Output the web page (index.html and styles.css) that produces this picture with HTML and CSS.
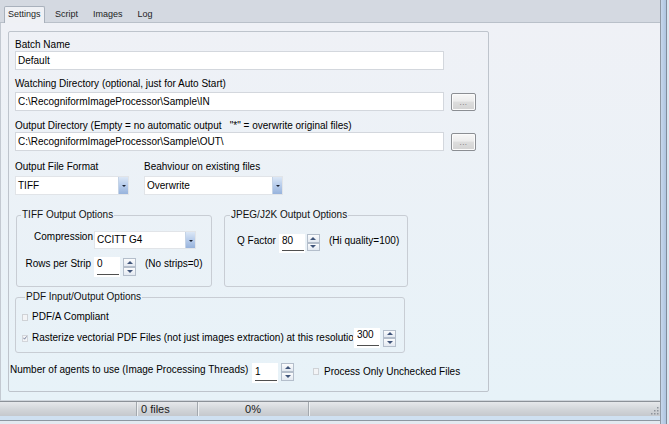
FILE: index.html
```html
<!DOCTYPE html>
<html>
<head>
<meta charset="utf-8">
<title>Batch Settings</title>
<link rel="stylesheet" href="styles.css">
</head>
<body>
<div class="window">
  <div class="client">
    <div class="tabs">
      <div class="tab active">Settings</div>
      <div class="tab first">Script</div>
      <div class="tab">Images</div>
      <div class="tab">Log</div>
    </div>
    <div class="panel">
      <div class="box">
        <div class="lbl">Batch Name</div>
        <div class="tb tb-batch">Default</div>

        <div class="lbl mt8">Watching Directory (optional, just for Auto Start)</div>
        <div class="line mt2">
          <div class="tb">C:\RecogniformImageProcessor\Sample\IN</div>
          <div class="btn"><span>...</span></div>
        </div>

        <div class="lbl mt9">Output Directory (Empty = no automatic output &nbsp;&nbsp;"*" = overwrite original files)</div>
        <div class="line">
          <div class="tb">C:\RecogniformImageProcessor\Sample\OUT\</div>
          <div class="btn"><span>...</span></div>
        </div>

        <div class="pair mt10">
          <div class="lbl col1">Output File Format</div>
          <div class="lbl">Beahviour on existing files</div>
        </div>
        <div class="pair mt3">
          <div class="dd dd-format"><span class="ddv">TIFF</span><span class="arr"></span></div>
          <div class="dd dd-behav"><span class="ddv">Overwrite</span><span class="arr"></span></div>
        </div>

        <div class="groups">
          <fieldset class="grp tiff">
            <legend>TIFF Output Options</legend>
            <div class="tgrid">
              <div class="rl">Compression</div>
              <div class="dd dd-comp"><span class="ddv">CCITT G4</span><span class="arr"></span></div>
              <div class="rl rl-rows">Rows per Strip</div>
              <div class="ctl">
                <div class="num"><div class="nv">0</div></div>
                <div class="spin"><div class="sb up"></div><div class="sb dn"></div></div>
                <span class="note n-strips">(No strips=0)</span>
              </div>
            </div>
          </fieldset>
          <fieldset class="grp jpeg">
            <legend>JPEG/J2K Output Options</legend>
            <div class="qrow">
              <span class="qlbl">Q Factor</span>
              <div class="num num-q"><div class="nv">80</div></div>
              <div class="spin"><div class="sb up"></div><div class="sb dn"></div></div>
              <span class="note n-q">(Hi quality=100)</span>
            </div>
          </fieldset>
        </div>

        <fieldset class="grp pdf">
          <legend>PDF Input/Output Options</legend>
          <div class="crow">
            <span class="cb"></span>
            <span class="clbl">PDF/A Compliant</span>
          </div>
          <div class="crow crow2">
            <span class="cb checked"><svg width="6" height="6" viewBox="0 0 6 6"><path d="M0.6 2.6 L2.3 4.8 L5.4 0.6" fill="none" stroke="#5d6b8c" stroke-width="1.2"/></svg></span>
            <span class="clbl clip">Rasterize vectorial PDF Files (not just images extraction) at this resolution</span>
            <div class="num num-res"><div class="nv">300</div></div>
            <div class="spin"><div class="sb up"></div><div class="sb dn"></div></div>
          </div>
        </fieldset>

        <div class="agents">
          <span class="albl">Number of agents to use (Image Processing Threads)</span>
          <div class="num"><div class="nv nv-low">1</div></div>
          <div class="spin spin-a"><div class="sb up"></div><div class="sb dn"></div></div>
          <span class="cb cb-proc"></span>
          <span class="plbl">Process Only Unchecked Files</span>
        </div>
      </div>
    </div>
    <div class="status">
      <div class="seg s1"></div>
      <div class="seg s2">0 files</div>
      <div class="seg s3">0%</div>
      <div class="seg s4">
        <svg class="grip" width="9" height="9" viewBox="0 0 9 9">
          <g fill="#8d939b">
            <rect x="7" y="1" width="1.5" height="1.5"/>
            <rect x="4" y="4" width="1.5" height="1.5"/>
            <rect x="7" y="4" width="1.5" height="1.5"/>
            <rect x="1" y="7" width="1.5" height="1.5"/>
            <rect x="4" y="7" width="1.5" height="1.5"/>
            <rect x="7" y="7" width="1.5" height="1.5"/>
          </g>
        </svg>
      </div>
    </div>
    <div class="bframe"></div>
  </div>
  <div class="rframe"></div>
</div>
</body>
</html>
```

FILE: styles.css
```css
* { box-sizing: border-box; }
html, body { margin: 0; padding: 0; }
body {
  width: 669px;
  height: 424px;
  overflow: hidden;
  font-family: "Liberation Sans", Arial, sans-serif;
  font-size: 10px;
  color: #000;
  background: #fff;
}
.window { display: flex; width: 669px; height: 424px; }
.client { width: 660px; display: flex; flex-direction: column; }
.rframe {
  width: 9px;
  background: linear-gradient(to right, #8f98a3 0 1px, #c6d7ec 1px, #aec4df 6px, #7f8c9b 6px 7px, #dde6f0 7px);
}

/* tabs */
.tabs {
  height: 23px;
  background: #d4d9e1;
  border-bottom: 1px solid #b9c0c9;
  display: flex;
  align-items: flex-end;
  padding-left: 4px;
}
.tab {
  font-size: 9px;
  height: 16px;
  line-height: 15px;
  padding: 0 6.5px;
  border: 1px solid transparent;
  border-bottom: none;
  color: #1e1e1e;
}
.tab.active {
  padding: 0 3px;
  background: #eff1f5;
  border-color: #a9b1bc;
  border-radius: 2px 2px 0 0;
  margin-bottom: -1px;
  height: 17px;
}
.tab.first { margin-left: 3px; }

/* panel */
.panel {
  flex: 1;
  background: linear-gradient(#eff1f6, #e7f2f8);
  border-left: 1px solid #c3c9d1;
  border-bottom: 1px solid #cfd5dc;
  padding: 8px 0 0 7px;
}
.box {
  width: 481px;
  height: 361px;
  border: 1px solid #bec4cc;
  border-radius: 2px;
  padding: 7px 0 0 6px;
}
.lbl { line-height: 12px; white-space: nowrap; }
.mt2 { margin-top: 2px; }
.mt3 { margin-top: 3px; }
.mt8 { margin-top: 8px; }
.mt9 { margin-top: 9px; }
.mt10 { margin-top: 10px; }

.tb {
  width: 429px;
  height: 19px;
  background: #fff;
  border: 1px solid #d3d7dd;
  line-height: 17px;
  padding-left: 2px;
  white-space: nowrap;
  overflow: hidden;
}
.line { display: flex; align-items: flex-start; }
.btn {
  margin-left: 7px;
  margin-top: 1px;
  width: 25px;
  height: 18px;
  border: 1px solid #8b8e93;
  border-radius: 2px;
  background: linear-gradient(#f7f7f7, #ececec 45%, #dddddd 50%, #d3d3d3);
  box-shadow: inset 0 0 0 1px #fbfbfb;
  display: flex;
  justify-content: center;
  align-items: flex-end;
  padding-bottom: 3px;
}
.btn span { font-size: 8px; line-height: 8px; color: #6c6c6c; letter-spacing: 0.5px; }

.pair { display: flex; align-items: flex-start; }
.col1 { width: 129px; }

.dd {
  display: flex;
  height: 19px;
  background: #fff;
  border: 1px solid #e1e4e8;
}
.ddv { flex: 1; line-height: 17px; padding-left: 2px; white-space: nowrap; }
.arr {
  width: 10px;
  background: linear-gradient(#dbe7f6, #b7cceb 50%, #97b3dc);
  border-left: 1px solid #c4d3e6;
  display: flex;
  align-items: center;
  justify-content: center;
}
.arr::before {
  content: "";
  border-left: 2px solid transparent;
  border-right: 2px solid transparent;
  border-top: 2px solid #1a2130;
  margin-top: 1px;
}
.dd-format { width: 114px; margin-right: 15px; }
.dd-behav { width: 139px; }
.dd-comp { width: 102px; height: 18px; }
.dd-comp .ddv { line-height: 16px; }

/* group boxes */
.groups { display: flex; gap: 12px; margin-top: 14px; margin-left: 1px; align-items: stretch; }
.grp {
  margin: 0;
  padding: 0;
  min-width: 0;
  border: 1px solid #c8cdd4;
  border-radius: 3px;
}
.grp legend {
  padding: 0 1px;
  margin-left: 4px;
  line-height: 12px;
  font-size: 10px;
  color: #111;
}
.tiff { width: 196px; padding: 10px 0 9px 0; }
.jpeg { width: 184px; }
.jpeg legend { margin-left: 5px; }

.tgrid {
  display: grid;
  grid-template-columns: 76px auto;
  column-gap: 1px;
  row-gap: 8px;
  align-items: start;
}
.rl { text-align: right; line-height: 12px; white-space: nowrap; }
.rl-rows { padding-right: 2px; margin-top: 1px; }
.ctl { display: flex; align-items: flex-start; }

.num {
  width: 26px;
  height: 20px;
  background: #fff;
  padding: 1px 1px 2px 3px;
  display: flex;
  flex-direction: column;
}
.nv {
  flex: 1;
  line-height: 12px;
  border-bottom: 1px solid #4f4f4f;
}
.nv-low { padding-top: 2px; }
.spin {
  margin-left: 3px;
  margin-top: 1px;
  width: 13px;
  height: 18px;
  display: flex;
  flex-direction: column;
  gap: 0;
}
.sb {
  flex: 1;
  border: 1px solid #b4becb;
  background: linear-gradient(#fbfcfd, #e3e9f1);
  display: flex;
  align-items: center;
  justify-content: center;
}
.sb.up::before {
  content: "";
  border-left: 3px solid transparent;
  border-right: 3px solid transparent;
  border-bottom: 3px solid #40557a;
}
.sb.dn::before {
  content: "";
  border-left: 3px solid transparent;
  border-right: 3px solid transparent;
  border-top: 3px solid #40557a;
}
.note { line-height: 12px; white-space: nowrap; margin-top: 1px; }
.n-strips { margin-left: 9px; }

.qrow { display: flex; align-items: flex-start; padding: 13px 0 0 12px; }
.qlbl { line-height: 12px; margin-top: 1px; }
.num-q { margin-left: 3px; height: 19px; }
.qrow .spin { margin-left: 2px; margin-top: 0; height: 17px; }
.n-q { margin-left: 9px; }

.pdf { width: 390px; margin-top: 4px; padding: 8px 0 4px 6px; }
.pdf legend { margin-left: 3px; }
.crow { display: flex; align-items: center; height: 12px; }
.crow2 { margin-top: 5px; height: 20px; }
.cb {
  width: 6px;
  height: 7px;
  border: 1px solid #cfd2d6;
  background: #f3f4f6;
  display: flex;
  align-items: center;
  justify-content: center;
  flex: none;
}
.cb.checked { border-color: #d2d5da; }
.cb svg { display: block; }
.clbl { margin-left: 4px; line-height: 12px; white-space: nowrap; }
.clip { width: 321px; overflow: hidden; flex: none; }
.num-res { margin-left: 1px; }
.crow2 .spin { margin-top: 0; height: 17px; }

.agents {
  display: flex;
  align-items: flex-start;
  margin-top: 10px;
  margin-left: -5px;
}
.albl { width: 242px; flex: none; line-height: 12px; margin-top: 1px; white-space: nowrap; }
.spin-a { margin-top: 0; }
.cb-proc { margin-left: 19px; margin-top: 5px; }
.plbl { margin-left: 5px; margin-top: 3px; line-height: 12px; white-space: nowrap; }

/* status bar */
.status {
  height: 15px;
  border-top: 1px solid #8c9198;
  background: linear-gradient(#e6e8eb, #d3d6da 50%, #c5c8cd);
  display: flex;
  font-size: 11px;
  line-height: 14px;
  color: #1a1a1a;
}
.seg { height: 14px; }
.s1 { width: 136px; }
.s2 { width: 61px; padding-left: 4px; border-left: 1px solid #a3a8ae; box-shadow: inset 1px 0 #eef0f2; }
.s3 { width: 111px; text-align: center; border-left: 1px solid #a3a8ae; box-shadow: inset 1px 0 #eef0f2; }
.s4 { flex: 1; border-left: 1px solid #a3a8ae; box-shadow: inset 1px 0 #eef0f2; display: flex; justify-content: flex-end; align-items: flex-end; padding: 0 1px 1px 0; }
.grip { display: block; }

.bframe {
  height: 8px;
  background: linear-gradient(#cfe0f1 0 4px, #8d96a0 4px 5px, #e3e9f0 5px);
}
```
